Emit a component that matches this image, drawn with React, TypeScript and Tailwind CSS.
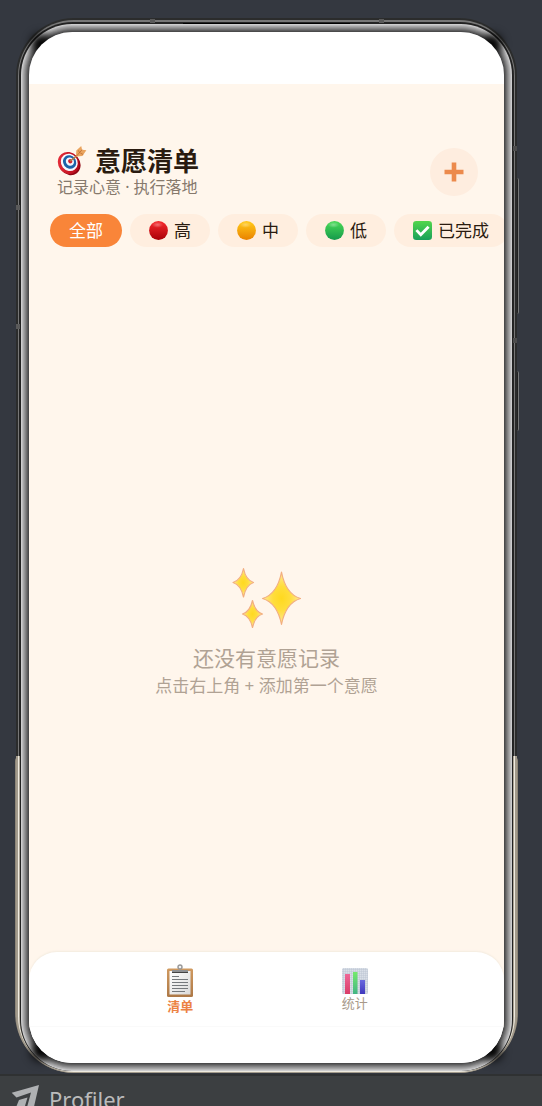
import React, { useState } from "react";

const filters = [
  { id: "all", label: "全部", icon: null },
  { id: "high", label: "高", icon: <Dot id="dot-red" from="#f0262a" to="#a90008" /> },
  { id: "mid", label: "中", icon: <Dot id="dot-amber" from="#ffc417" to="#e98200" /> },
  { id: "low", label: "低", icon: <Dot id="dot-green" from="#45d455" to="#159a4c" /> },
  { id: "done", label: "已完成", icon: <DoneIcon /> },
];

function Dot({ id, from, to }: { id: string; from: string; to: string }) {
  return (
    <svg viewBox="0 0 20 20" className="size-[19px] shrink-0" aria-hidden="true">
      <defs>
        <linearGradient id={id} x1="0" y1="0" x2="0" y2="1">
          <stop offset="0.1" stopColor={from} />
          <stop offset="1" stopColor={to} />
        </linearGradient>
        <radialGradient id={id + "-shine"}>
          <stop offset="0" stopColor="#fff" stopOpacity="0.35" />
          <stop offset="1" stopColor="#fff" stopOpacity="0" />
        </radialGradient>
      </defs>
      <circle cx="10" cy="10" r="9.9" fill={`url(#${id})`} />
      <ellipse cx="9" cy="4" rx="6" ry="3.2" fill={`url(#${id}-shine)`} />
    </svg>
  );
}

function DoneIcon() {
  return (
    <svg viewBox="0 0 20 20" className="size-[19px] shrink-0" aria-hidden="true">
      <defs>
        <linearGradient id="done" x1="0" y1="0" x2="0" y2="1">
          <stop offset="0" stopColor="#52d64c" />
          <stop offset="1" stopColor="#18a05a" />
        </linearGradient>
      </defs>
      <rect width="20" height="20" rx="3.5" fill="url(#done)" />
      <path d="M3.6 9.6 8.2 14.4 16.4 6" fill="none" stroke="#fff" strokeWidth="3" />
    </svg>
  );
}

function TargetIcon() {
  return (
    <svg viewBox="0 0 30 30" className="size-[30px] shrink-0" aria-hidden="true">
      <defs>
        <linearGradient id="target" x1="0" y1="0" x2="1" y2="1">
          <stop offset="0" stopColor="#ef3440" />
          <stop offset="1" stopColor="#a80012" />
        </linearGradient>
      </defs>
      <ellipse cx="12.8" cy="18.2" rx="10.4" ry="11.4" fill="#8f0714" transform="rotate(-38 12.8 18.2)" />
      <ellipse cx="11.6" cy="17" rx="10.4" ry="11.4" fill="url(#target)" transform="rotate(-38 11.6 17)" />
      <ellipse cx="12.3" cy="16.4" rx="8.2" ry="9" fill="#f7f8fc" transform="rotate(-38 12.3 16.4)" />
      <ellipse cx="12.6" cy="16" rx="6.4" ry="7.1" fill="#1c63a8" transform="rotate(-38 12.6 16)" />
      <ellipse cx="12.9" cy="15.6" rx="3.9" ry="4.4" fill="#f3f6fc" transform="rotate(-38 12.9 15.6)" />
      <ellipse cx="13.2" cy="15.2" rx="2" ry="2.3" fill="#d3202e" transform="rotate(-38 13.2 15.2)" />
      <path d="M13.2 15.2 24 6.500" stroke="#b67843" strokeWidth="1.5" />
      <path d="M19 10.500 19.300 4.500 24.200 0l.9 3.700 4.300.6-4 5.600-6.400.6Z" fill="#eaa45e" />
      <path d="m19.600 10 5.500-6.300M21.400 4.400l1.200 2.400M26.200 8.600l-2.900-1.600" stroke="#b5632c" strokeWidth="0.7" />
    </svg>
  );
}

function SparklesIcon() {
  return (
    <svg viewBox="0 0 72 64" className="h-16 w-18" aria-hidden="true">
      <defs>
        <radialGradient id="spark">
          <stop offset="0" stopColor="#ffd91f" />
          <stop offset="0.45" stopColor="#ffdd3c" />
          <stop offset="1" stopColor="#ffe79a" />
        </radialGradient>
      </defs>
      <g fill="url(#spark)" stroke="#f2ae80" strokeWidth="1.2" strokeLinejoin="round">
        <path d="M50.5 6C53 19 58 29 69.5 32.5 58 36 53 46 50.5 58.5 48 46 43 36 31.5 32.5 43 29 48 19 50.5 6Z" />
        <path d="M12.5 2.5C14 10 16.5 14.5 22.5 16.5 16.5 18.5 14 24 12.5 31 11 24 8.5 18.5 2 16.5 8.5 14.5 11 10 12.5 2.5Z" />
        <path d="M21.5 34.5C23 41.5 25.5 46 31.5 48 25.5 50 23 54.5 21.5 61.5 20 54.5 17.5 50 11.5 48 17.5 46 20 41.5 21.5 34.5Z" />
      </g>
    </svg>
  );
}

function ClipboardIcon() {
  return (
    <svg viewBox="0 0 28 34" className="h-[34px] w-7" aria-hidden="true">
      <defs>
        <linearGradient id="board" x1="0" y1="0" x2="0" y2="1">
          <stop offset="0" stopColor="#d09a60" />
          <stop offset="1" stopColor="#ad7846" />
        </linearGradient>
        <linearGradient id="paper" x1="0" y1="0" x2="1" y2="1">
          <stop offset="0" stopColor="#fff" />
          <stop offset="1" stopColor="#dadada" />
        </linearGradient>
      </defs>
      <rect x="1" y="4.5" width="26" height="28.5" rx="1.5" fill="url(#board)" />
      <rect x="3.5" y="7" width="21" height="23.5" fill="url(#paper)" />
      <circle cx="14" cy="3" r="2" fill="#f2f2f2" stroke="#979797" strokeWidth="1.4" />
      <path d="M6 6h16v3H6Z" fill="#8e9093" />
      <path d="M6 8.5h16" stroke="#444" />
      <path d="M6 12.5h7M6 15.5h16M6 18.5h16M6 21.5h16M6 24.500h16M6 27.500h13" stroke="#74787c" />
    </svg>
  );
}

function ChartIcon() {
  return (
    <svg viewBox="0 0 28 28" className="size-7" aria-hidden="true">
      <defs>
        <pattern id="chart-grid" width="2" height="2" patternUnits="userSpaceOnUse">
          <rect width="2" height="2" fill="#d9dfe8" />
          <path d="M0 0h2M0 0v2" stroke="#b9c2d1" strokeWidth="0.8" />
        </pattern>
        <linearGradient id="bar-red" x1="0" y1="0" x2="0" y2="1">
          <stop offset="0" stopColor="#ee6797" />
          <stop offset="1" stopColor="#da3d68" />
        </linearGradient>
        <linearGradient id="bar-green" x1="0" y1="0" x2="0" y2="1">
          <stop offset="0" stopColor="#75ea6d" />
          <stop offset="1" stopColor="#42b584" />
        </linearGradient>
        <linearGradient id="bar-blue" x1="0" y1="0" x2="0" y2="1">
          <stop offset="0" stopColor="#6868df" />
          <stop offset="1" stopColor="#4038bd" />
        </linearGradient>
      </defs>
      <rect x="1" y="1" width="26" height="26" rx="1.5" fill="url(#chart-grid)" />
      <rect x="4" y="7" width="5" height="20" fill="url(#bar-red)" />
      <rect x="12" y="5" width="4.5" height="22" fill="url(#bar-green)" />
      <rect x="19" y="13" width="5" height="14" fill="url(#bar-blue)" />
    </svg>
  );
}

// Metal body of the handset: dark upper half, champagne lower half
function PhoneFrame({ children }: { children: React.ReactNode }) {
  return (
    <div className="relative flex flex-1 flex-col">
      {/* Side keys */}
      <div className="absolute -right-0.5 top-[160px] h-[136px] w-1 rounded-sm border-r border-[#77797a] bg-[#222]" />
      <div className="absolute -right-0.5 top-[353px] h-[60px] w-1 rounded-sm border-r border-[#77797a] bg-[#222]" />
      <div className="absolute -inset-x-px bottom-0 h-[316px] rounded-t-sm rounded-b-[60px] bg-[#8e8678]" />

      <div className="relative flex flex-1 flex-col rounded-[58px] bg-linear-to-b from-[#2b2c2c] from-70% to-[#a39b8c] to-70% px-0.5 pt-0.5 pb-px">
        <div className="flex flex-1 flex-col rounded-[56px] bg-linear-to-b from-[#777] from-70% to-[#eeeae0] to-70% px-px pt-0.5 pb-px">
          <div className="relative flex flex-1 flex-col rounded-[54px] bg-linear-to-b from-[#242424] from-70% to-[#aaa293] to-70% px-px pt-px">
            {/* Polished bezel */}
            <div className="relative flex flex-1 flex-col rounded-[51px] bg-[#222] px-[9px] pt-[9px] pb-2">
              <div className="relative flex flex-1 flex-col">
                <div className="absolute inset-0 rounded-[43px] shadow-[0_0_0_1px_#4a4a4b,0_0_0_2px_#5c5c5d,0_0_0_3px_#707071,0_0_0_4px_#838384,0_0_0_5px_#959596,0_0_0_6px_#a6a6a7,0_0_0_7px_#bababb,0_0_0_8px_#cdcdce]" />
                <div className="absolute left-0.5 top-0.5 size-5 rounded-full bg-black blur-[5px]" />
                <div className="absolute right-0.5 top-0.5 size-5 rounded-full bg-black blur-[5px]" />
                <div className="absolute bottom-0.5 left-0.5 size-5 rounded-full bg-black blur-[5px]" />
                <div className="absolute bottom-0.5 right-0.5 size-5 rounded-full bg-black blur-[5px]" />
                <div className="relative flex flex-1 flex-col overflow-hidden rounded-[43px] bg-white">
                  {children}
                </div>
              </div>
            </div>
          </div>
        </div>
      </div>

      {/* Earpiece and antenna bands */}
      <div className="absolute top-[5px] left-1/3 h-px w-1/3 bg-black" />
      <div className="absolute top-px left-[134px] h-1 w-[5px] bg-[#5a5a5a]" />
      <div className="absolute top-px right-[133px] h-1 w-[5px] bg-[#5a5a5a]" />
      <div className="absolute top-[187px] left-0 h-[5px] w-1 bg-[#5a5a5a]" />
      <div className="absolute top-[306px] left-0 h-[5px] w-1 bg-[#5a5a5a]" />
      <div className="absolute top-[128px] right-0 h-[5px] w-1 bg-[#4c4c4c]" />
      <div className="absolute top-[320px] right-0 h-[5px] w-1 bg-[#4c4c4c]" />
    </div>
  );
}

function App() {
  const [active, setActive] = useState("all");
  const [tab, setTab] = useState("list");

  return (
    <div className="flex min-h-screen flex-col bg-[#343840] font-['Noto_Sans','Noto_Sans_CJK_SC',sans-serif]">
      <div className="flex flex-1 flex-col pt-[18px] pr-[25px] pb-px pl-4">
        <PhoneFrame>
          <main className="mt-[52px] flex flex-1 flex-col bg-[#fff6ec]">
            {/* Header */}
            <header className="flex justify-between pt-[63px] pr-[26px] pl-7">
              <div>
                <h1 className="flex h-7 items-center gap-2 text-[26px] leading-7 font-bold text-[#2a1b10]">
                  <TargetIcon />
                  意愿清单
                </h1>
                <p className="text-base leading-6 text-[#86796c]">记录心意 · 执行落地</p>
              </div>
              <button
                aria-label="添加意愿"
                className="mt-px flex size-12 items-center justify-center rounded-full bg-[#feeddf]"
              >
                <svg viewBox="0 0 20 20" className="size-5" aria-hidden="true">
                  <path d="M10 0.5v19M0.5 10h19" stroke="#ec8a4c" strokeWidth="4.6" />
                </svg>
              </button>
            </header>

            {/* Priority filters */}
            <div className="mt-[15px] flex gap-2 overflow-hidden pl-[21px]">
              {filters.map((item) => (
                <button
                  key={item.id}
                  onClick={() => setActive(item.id)}
                  className={`flex h-[33px] shrink-0 items-center gap-1.5 rounded-full px-[19px] text-[17px] leading-6 ${
                    active === item.id ? "bg-[#f98539] text-white" : "bg-[#ffeedf] text-[#2a1b10]"
                  }`}
                >
                  {item.icon}
                  {item.label}
                </button>
              ))}
            </div>

            {/* Empty state */}
            <section className="flex flex-1 flex-col items-center justify-center pt-16 text-[#b0a294]">
              <SparklesIcon />
              <p className="mt-3 text-[21px] leading-8">还没有意愿记录</p>
              <p className="text-[17px] leading-6">点击右上角 + 添加第一个意愿</p>
            </section>

            {/* Bottom tabs */}
            <nav className="grid h-[75px] grid-cols-2 items-center rounded-t-[28px] border-b border-[#fafafa] bg-white pr-[62px] pl-16 shadow-[0_-1px_2px_#f3ebdf]">
              <button
                onClick={() => setTab("list")}
                className={`flex flex-col items-center text-[13px] leading-4 ${
                  tab === "list" ? "font-bold text-[#ec8243]" : "text-[#a8998a]"
                }`}
              >
                <ClipboardIcon />
                清单
              </button>
              <button
                onClick={() => setTab("stats")}
                className={`flex flex-col items-center text-[13px] leading-4 ${
                  tab === "stats" ? "font-bold text-[#ec8243]" : "text-[#a8998a]"
                }`}
              >
                <ChartIcon />
                统计
              </button>
            </nav>
          </main>
          <div className="h-9 bg-white" />
        </PhoneFrame>
      </div>

      {/* IDE tool window bar */}
      <footer className="h-8 overflow-hidden border-t-2 border-[#2f3132] bg-[#3c3f41]">
        <button className="flex items-start gap-2 pt-[7px] pl-[11px] font-['Noto_Sans',sans-serif] text-[22px] leading-8 text-[#bbb]">
          <svg viewBox="0 -2 30 30" className="size-[30px]" aria-hidden="true">
            <path d="M0.7 7.7 28 0 22 26h-7L20 7.5 5.500 12.500Z" fill="#afb1b3" />
            <path d="M8 15 16.5 12.500 12.500 26H3.500Z" fill="#afb1b3" />
          </svg>
          Profiler
        </button>
      </footer>
    </div>
  );
}

export default App;
